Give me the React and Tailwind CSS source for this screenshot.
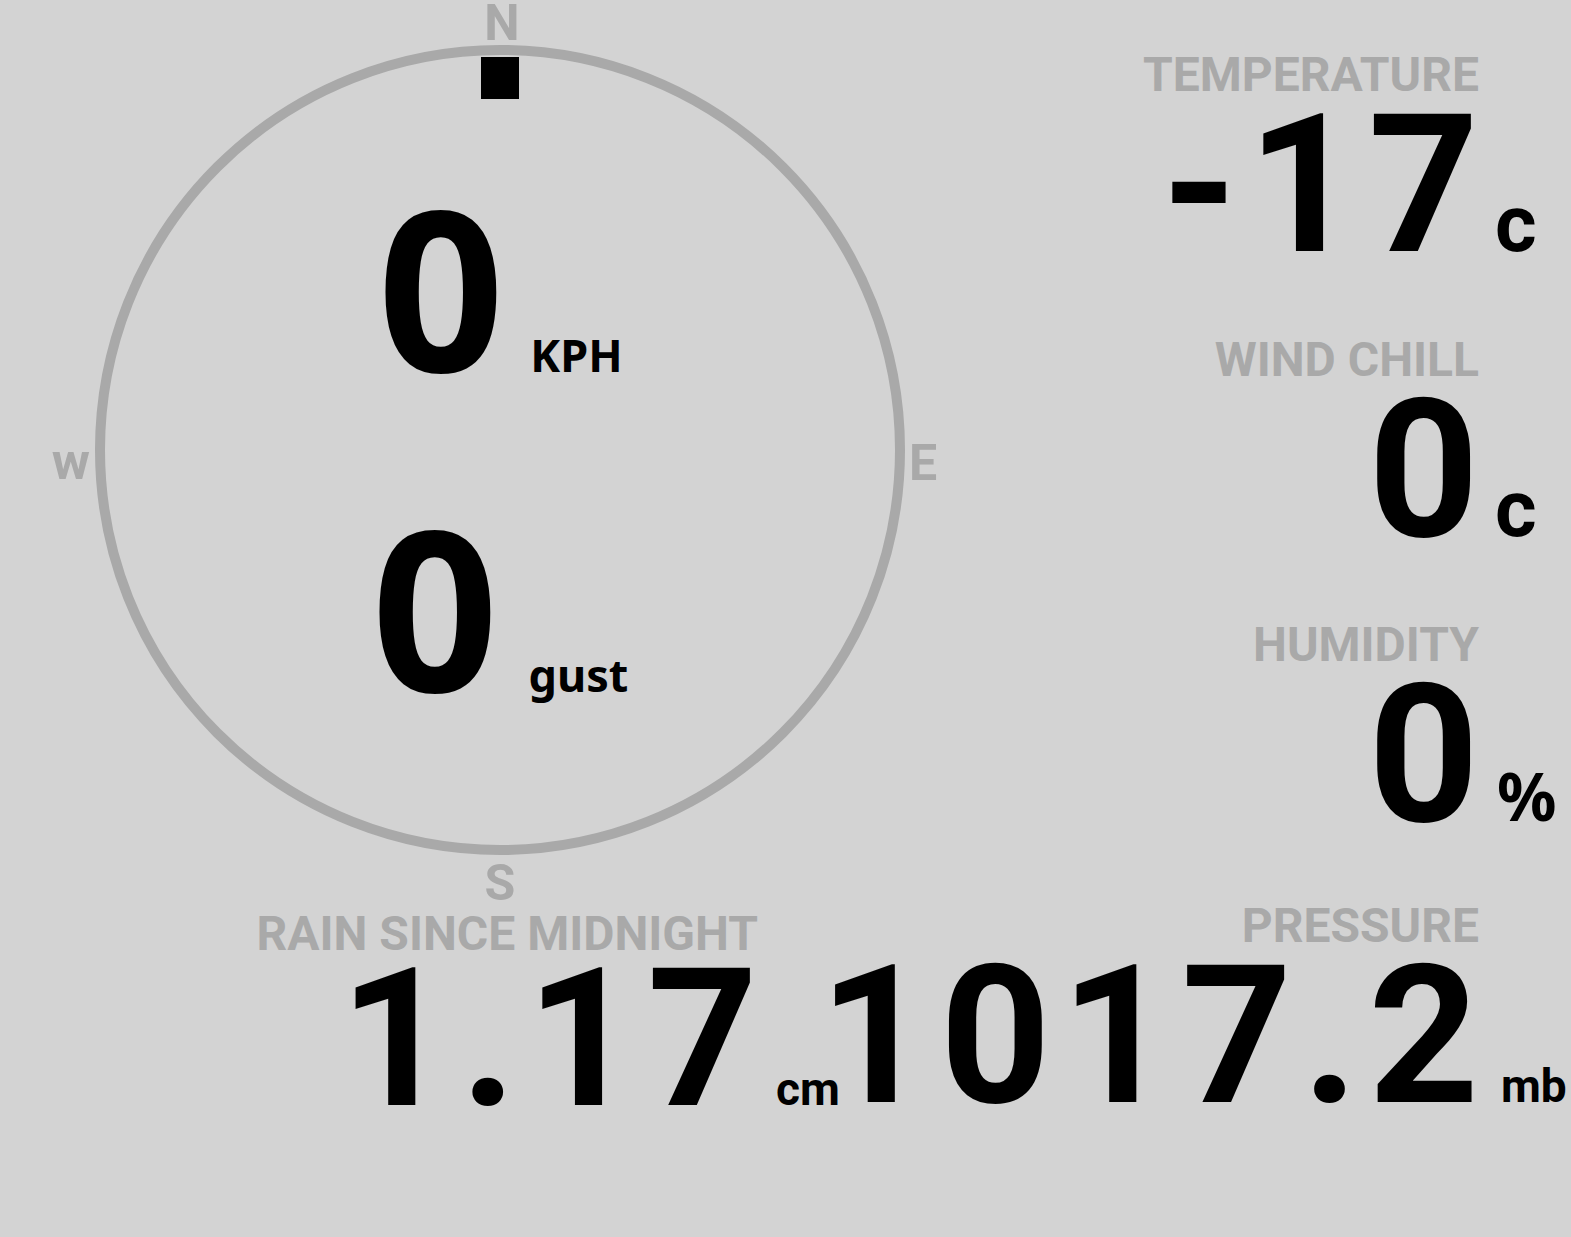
import React from "react";

const LABEL = "font-['Roboto',sans-serif] font-bold text-[48px] leading-none text-[#a9a9a9] whitespace-nowrap";
const BIG = "font-['Roboto',sans-serif] font-bold text-[193px] leading-[150px] text-black tracking-[10px] mr-[-10px] whitespace-nowrap";

function Stat({ label, value, unit, unitClass, className = "" }) {
  return (
    <div className={`flex flex-col items-end ${className}`}>
      <div className={LABEL}>{label}</div>
      <div className="flex items-baseline mt-[11px]">
        <span className={BIG}>{value}</span>
        {/* unit hangs past the right edge of the column */}
        <span className="w-0 flex items-baseline overflow-visible">
          <span className={`whitespace-nowrap text-black font-bold leading-none ${unitClass}`}>{unit}</span>
        </span>
      </div>
    </div>
  );
}

function Compass() {
  return (
    <div className="grid grid-cols-[95px_810px_60px] grid-rows-[45px_810px_auto]">
      {/* N */}
      <div className="col-start-2 row-start-1 flex justify-center">
        <span className="font-['Roboto',sans-serif] font-bold text-[50px] leading-[40px] text-[#a9a9a9] mt-[3px] ml-[4px]">N</span>
      </div>

      {/* w */}
      <div className="col-start-1 row-start-2 flex justify-end pr-[5px]">
        <span className="font-['Roboto',sans-serif] font-bold text-[52px] leading-none text-[#a9a9a9] mt-[391px]">w</span>
      </div>

      {/* dial */}
      <div className="col-start-2 row-start-2 w-[810px] h-[810px] rounded-full border-[10px] border-[#a9a9a9] flex flex-col items-center">
        <div className="w-[38px] h-[42px] bg-black mt-[2px]" />
        <div className="flex items-baseline mt-[76px]">
          <span className="font-['Noto_Sans',sans-serif] font-bold text-[222px] leading-none text-black">0</span>
          <span className="font-['Noto_Sans',sans-serif] font-bold text-[45px] leading-none text-black ml-[26px]">KPH</span>
        </div>
        <div className="flex items-baseline mt-[98px]">
          <span className="font-['Noto_Sans',sans-serif] font-bold text-[222px] leading-none text-black">0</span>
          <span className="font-['Noto_Sans',sans-serif] font-bold text-[45px] leading-none text-black ml-[30px]">gust</span>
        </div>
      </div>

      {/* E */}
      <div className="col-start-3 row-start-2 flex justify-start pl-[4px]">
        <span className="font-['Roboto',sans-serif] font-bold text-[50px] leading-none text-[#a9a9a9] mt-[393px]">E</span>
      </div>

      {/* S */}
      <div className="col-start-2 row-start-3 flex justify-center">
        <span className="font-['Roboto',sans-serif] font-bold text-[50px] leading-none text-[#a9a9a9] mt-[3px]">S</span>
      </div>
    </div>
  );
}

export default function App() {
  return (
    <div className="min-h-screen w-full bg-[#d3d3d3] flex overflow-hidden">
      <div className="w-[960px] shrink-0 flex flex-col">
        <Compass />
        <div className="flex flex-col items-end pr-[202px] mt-[2px]">
          <div className={LABEL}>RAIN SINCE MIDNIGHT</div>
          <div className="flex items-baseline mt-[6px]">
            <span className={BIG}>1.17</span>
            <span className="w-0 flex items-baseline overflow-visible">
              <span className="whitespace-nowrap text-black font-bold leading-none font-['Roboto',sans-serif] text-[46px] ml-[18px]">cm</span>
            </span>
          </div>
        </div>
      </div>

      <div className="flex-1 min-w-0 flex flex-col items-end pr-[92px] pt-[51px] gap-[72px]">
        <Stat label="TEMPERATURE" value="-17" unit="c" unitClass="font-['Roboto',sans-serif] text-[80px] ml-[16px]" />
        <Stat label="WIND CHILL" value="0" unit="c" unitClass="font-['Roboto',sans-serif] text-[80px] ml-[16px]" />
        <Stat label="HUMIDITY" value="0" unit="%" unitClass="font-['Noto_Sans',sans-serif] text-[66px] ml-[18px]" />
        <Stat label="PRESSURE" value="1017.2" unit="mb" unitClass="font-['Roboto',sans-serif] text-[46px] ml-[22px]" />
      </div>
    </div>
  );
}
